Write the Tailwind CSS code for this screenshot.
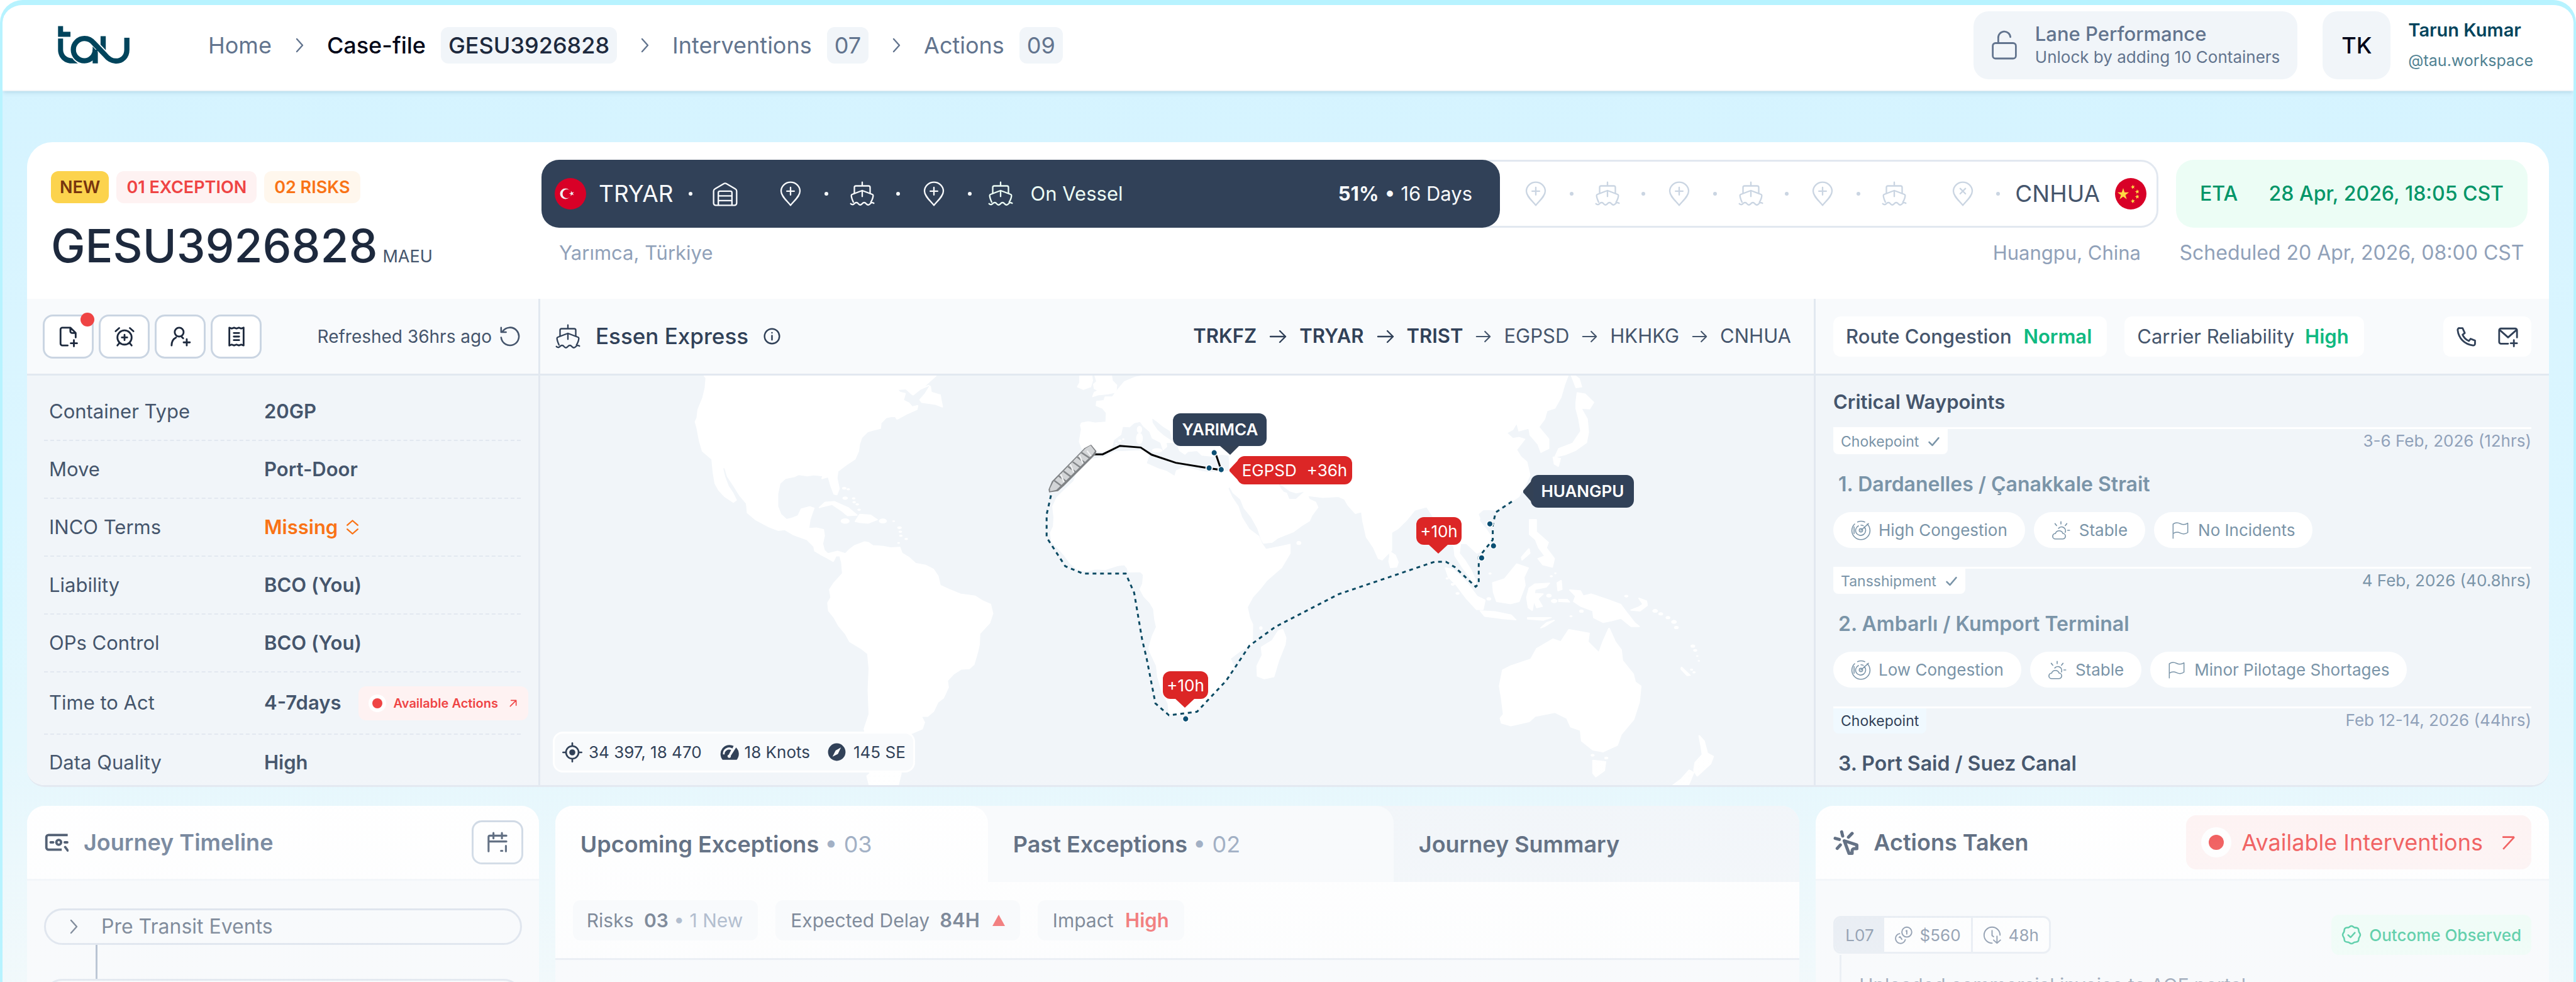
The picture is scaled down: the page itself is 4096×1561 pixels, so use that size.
<!DOCTYPE html>
<html lang="en">
<head>
  <meta charset="UTF-8">
  <meta name="viewport" content="width=device-width, initial-scale=1.0">
  <title>Case-file GESU3926828 - tau</title>
  <script src="https://cdn.jsdelivr.net/npm/@tailwindcss/browser@4"></script>
</head>
<body class="bg-white font-[family-name:Inter,sans-serif] text-slate-700">

  <!-- Icon set -->
  <svg class="hidden" aria-hidden="true">
    <symbol id="chevron" viewBox="0 0 24 24" fill="none" stroke="currentColor" stroke-width="2.4" stroke-linecap="round" stroke-linejoin="round"><path d="M8 2l9 10-9 10"/></symbol>
    <symbol id="arrow" viewBox="0 0 28 24" fill="none" stroke="currentColor" stroke-width="2.4" stroke-linecap="round" stroke-linejoin="round"><path d="M2 12h24M17 3l9 9-9 9"/></symbol>
    <symbol id="arrow-ne" viewBox="0 0 24 24" fill="none" stroke="currentColor" stroke-width="2.4" stroke-linecap="round" stroke-linejoin="round"><path d="M5 19L19 5M7 5h12v12"/></symbol>
    <symbol id="arrow-bare" viewBox="0 0 24 24" fill="none" stroke="currentColor" stroke-width="2.6"><path d="M3 3.500h18M21 3.500L4 22"/></symbol>
    <symbol id="check" viewBox="0 0 24 24" fill="none" stroke="currentColor" stroke-width="3" stroke-linecap="round" stroke-linejoin="round"><path d="M3 13l6 6L21 5"/></symbol>
    <symbol id="ship" viewBox="0 0 24 24" fill="none" stroke="currentColor" stroke-width="1.4" stroke-linecap="round" stroke-linejoin="round"><path d="M12 1v3.500M4.500 11.500V6a1.500 1.500 0 0 1 1.500-1.500h12A1.500 1.500 0 0 1 19.500 6v5.500M12 9v5.500M3.500 20C2.200 17 1.600 15 1.600 13.600c0-.5.3-.8.8-1L11 9.300a2.500 2.500 0 0 1 2 0l8.600 3.300c.5.200.8.500.8 1 0 1.500-.8 4-2.200 6.400M1 21.500c.8 1 2.200 1.200 3.400 0 1.300-1.500 2.800-1.500 3.900 0s2.500 1.500 3.700 0 2.500-1.500 3.700 0 2.600 1.500 3.800.1 2.200-1.500 3.500-.6"/></symbol>
    <symbol id="pin" viewBox="0 0 20 24" fill="none" stroke="currentColor" stroke-width="1.400" stroke-linecap="round" stroke-linejoin="round"><path d="M10 23C7 19 1 14.500 1 9.500a9 8.500 0 0 1 18 0C19 14.500 13 19 10 23zM10 6v7M6.500 9.500h7"/></symbol>
    <symbol id="pin-x" viewBox="0 0 20 24" fill="none" stroke="currentColor" stroke-width="1.400" stroke-linecap="round" stroke-linejoin="round"><path d="M10 23C7 19 1 14.500 1 9.500a9 8.500 0 0 1 18 0C19 14.500 13 19 10 23zM7.500 7l5 5M12.500 7l-5 5"/></symbol>
    <symbol id="warehouse" viewBox="0 0 24 24" fill="none" stroke="currentColor" stroke-width="1.400" stroke-linecap="round" stroke-linejoin="round"><path d="M1 9.500c0-1 .4-1.700 1.300-2.200L10.500 2.500a3 3 0 0 1 3 0l8.200 4.800c.9.500 1.300 1.200 1.300 2.200V21a2 2 0 0 1-2 2H3a2 2 0 0 1-2-2zM5.500 23V11a1.500 1.500 0 0 1 1.500-1.500h10a1.500 1.500 0 0 1 1.500 1.500v12M5.500 14h13M5.500 18.500h13"/></symbol>
    <symbol id="info" viewBox="0 0 24 24" fill="none" stroke="currentColor" stroke-width="2.200" stroke-linecap="round"><circle cx="12" cy="12" r="10.500"/><path d="M12 11v6M12 7v.2"/></symbol>
    <symbol id="lock-open" viewBox="0 0 24 28" fill="none" stroke="currentColor" stroke-width="1.600" stroke-linecap="round" stroke-linejoin="round"><rect x="1.500" y="12" width="21" height="14" rx="2.500"/><path d="M6.500 12V7.500a5.500 5.500 0 0 1 11-1"/></symbol>
    <symbol id="file-plus" viewBox="0 0 24 24" fill="none" stroke="currentColor" stroke-width="2" stroke-linecap="round" stroke-linejoin="round"><path d="M11 22H5a2 2 0 0 1-2-2V4a2 2 0 0 1 2-2h9l6 6v5M14 2v4a2 2 0 0 0 2 2h4M18 16v7M14.500 19.500h7"/></symbol>
    <symbol id="alarm-plus" viewBox="0 0 24 24" fill="none" stroke="currentColor" stroke-width="2" stroke-linecap="round" stroke-linejoin="round"><circle cx="12" cy="13" r="8"/><path d="M12 10v6M9 13h6M2 6l4-3.500M22 6l-4-3.500M6.500 19L4 22M17.500 19l2.500 3"/></symbol>
    <symbol id="user-plus" viewBox="0 0 24 24" fill="none" stroke="currentColor" stroke-width="2" stroke-linecap="round" stroke-linejoin="round"><circle cx="10.500" cy="7" r="5"/><path d="M2 22c0-4 2-7.500 5-9M13.500 12.500l1.500 1.500M19 15v7M15.500 18.500h7"/></symbol>
    <symbol id="receipt" viewBox="0 0 24 24" fill="none" stroke="currentColor" stroke-width="2" stroke-linecap="round" stroke-linejoin="round"><path d="M4 2l2.700 1L9.300 2 12 3l2.700-1 2.600 1L20 2v20l-2.700-1-2.600 1-2.700-1-2.700 1-2.600-1L4 22zM9 8h6M9 12h6M9 16h6"/></symbol>
    <symbol id="refresh" viewBox="0 0 24 24" fill="none" stroke="currentColor" stroke-width="1.800" stroke-linecap="round" stroke-linejoin="round"><path d="M3.500 6.500A10 10 0 1 1 2 13M2 2v5h5.500"/></symbol>
    <symbol id="phone" viewBox="0 0 24 24" fill="none" stroke="currentColor" stroke-width="2" stroke-linecap="round" stroke-linejoin="round"><path d="M7.500 2.500H4A2 2 0 0 0 2 4.700C3 14 10 21 19.300 22a2 2 0 0 0 2.200-2v-3.500l-5-2-2 2.500a14 14 0 0 1-7-7L10 8z"/></symbol>
    <symbol id="mail-plus" viewBox="0 0 24 24" fill="none" stroke="currentColor" stroke-width="2" stroke-linecap="round" stroke-linejoin="round"><path d="M12 20H4a2 2 0 0 1-2-2V5a2 2 0 0 1 2-2h16a2 2 0 0 1 2 2v8M2.500 4.500L12 13l9.500-8.500M18.500 16v7M15 19.500h7"/></symbol>
    <symbol id="sort" viewBox="0 0 20 24" fill="none" stroke="currentColor" stroke-width="2.200" stroke-linecap="round" stroke-linejoin="round"><path d="M2 9l8-7 8 7M2 15l8 7 8-7"/></symbol>
    <symbol id="radar" viewBox="0 0 24 24" fill="none" stroke="currentColor" stroke-width="1.200" stroke-linecap="round"><path d="M19.500 4.500A10.800 10.800 0 1 1 4.500 4.500M8 2a10.800 10.800 0 0 1 8.500.1M16 8a6 6 0 1 1-7-1.300M12 5.800c1 0 2 .2 2.800.7M12 12l9-8M3.800 8v8"/><circle cx="12" cy="12" r="2"/></symbol>
    <symbol id="weather" viewBox="0 0 24 24" fill="none" stroke="currentColor" stroke-width="1.300" stroke-linecap="round" stroke-linejoin="round"><path d="M5 23h9a3.500 3.500 0 0 0 .5-7 5 5 0 0 0-9.500 0 3.500 3.500 0 0 0 0 7zM9 9.500a5 5 0 0 1 8.500 5M12 1v3M4.500 3.500L6.500 6M19.500 3.500L17.500 6M20.500 12H23"/></symbol>
    <symbol id="flag" viewBox="0 0 24 24" fill="none" stroke="currentColor" stroke-width="1.300" stroke-linecap="round" stroke-linejoin="round"><path d="M2 23V3.500c4-3 7-2 10-.5s6 2 10-.8V15c-4 3-7 2.300-10 .8s-6-2.300-10 .7"/></symbol>
    <symbol id="crosshair" viewBox="0 0 24 24" fill="none" stroke="currentColor" stroke-width="2" stroke-linecap="round"><circle cx="12" cy="12" r="7.500"/><circle cx="12" cy="12" r="2.600" fill="currentColor"/><path d="M12 1v3M12 20v3M1 12h3M20 12h3"/></symbol>
    <symbol id="gauge" viewBox="0 0 24 20" fill="currentColor"><path d="M3.500 19A11 11 0 0 1 17 2.200l-1.500 3A7.500 7.500 0 0 0 4 12.500h2A5.500 5.500 0 0 1 14 7.200l-3 5.600a2 2 0 1 0 2.500 1.400L20 4a11 11 0 0 1 .8 15z"/></symbol>
    <symbol id="compass" viewBox="0 0 24 24"><circle cx="12" cy="12" r="11.500" fill="currentColor"/><path d="M17.500 6l-4 8.500L6.500 18l4-8z" fill="#fff"/></symbol>
    <symbol id="timeline" viewBox="0 0 28 22" fill="none" stroke="currentColor" stroke-width="2.800" stroke-linejoin="round"><path d="M27 2.500H4.500a2.500 2.500 0 0 0-2.500 2.500v12a2.500 2.500 0 0 0 2.500 2.500H20"/><circle cx="16.500" cy="11" r="2.800"/><path d="M7 11h3M23.500 11h3M24 16.500l3 4" stroke-linecap="round"/></symbol>
    <symbol id="calendar" viewBox="0 0 24 24" fill="none" stroke="currentColor" stroke-width="2.200" stroke-linecap="round" stroke-linejoin="round"><path d="M2 22V6a1.500 1.500 0 0 1 1.500-1.500H22M2 11h20M7.500 1.500v6M17 1.500v6M21.500 16v6M16 21.500h1.500"/></symbol>
    <symbol id="click" viewBox="0 0 24 24" fill="none" stroke="currentColor" stroke-width="3" stroke-linecap="round" stroke-linejoin="round"><path d="M10.500 10.500l12 4v3.500h-2.500a2 2 0 0 0-2 2v2.500h-3zM8 2l1 4M1.800 8.200l4 1M18 3.500L14.500 7M3.800 17.800l3-3.300"/></symbol>
    <symbol id="coins" viewBox="0 0 24 24" fill="none" stroke="currentColor" stroke-width="1.600" stroke-linecap="round" stroke-linejoin="round"><circle cx="16.500" cy="8" r="6.500"/><path d="M7 10a6.500 6.500 0 1 0 7.500 8M15.500 6.500l1-.5v4.500M6.500 15l1-1 2.500 3.500"/></symbol>
    <symbol id="clock-down" viewBox="0 0 24 24" fill="none" stroke="currentColor" stroke-width="1.600" stroke-linecap="round" stroke-linejoin="round"><path d="M12 22.500A10.500 10.500 0 1 1 22.500 12M12 6v6.500l2 1.500M18.500 13.500v9M14 18.500l4.500 4 4.500-4"/></symbol>
    <symbol id="badge-check" viewBox="0 0 24 24" fill="none" stroke="currentColor" stroke-width="1.900" stroke-linecap="round" stroke-linejoin="round"><path d="M12 1.500c1.700 0 2.300 1.500 3.800 1.800s3 0 4 1.100.6 2.600 1.100 4 1.600 2 1.600 3.600-1.100 2.300-1.600 3.700 0 2.900-1.100 4-2.500.7-4 1.100-2.100 1.700-3.800 1.700-2.300-1.300-3.800-1.700-3 0-4-1.100-.6-2.600-1.100-4S1.500 13.600 1.500 12s1.100-2.200 1.600-3.600 0-2.900 1.100-4 2.500-.800 4-1.100S10.300 1.500 12 1.500zM8 12.300l3 2.700 5-5.500"/></symbol>
  </svg>

  <div class="relative h-screen overflow-hidden rounded-t-[36px] border-x-4 border-t-8 border-[#b7f3ff] bg-linear-to-b from-[#d4f3ff] via-[#dcf6ff] to-[#ecf8fb]">

    <!-- Top bar -->
    <header class="flex h-[137px] items-center justify-between rounded-t-[28px] border-b-2 border-slate-100 bg-white pr-16 pb-2 pl-[88px] shadow-md shadow-sky-900/10">
      <div class="flex items-center">
        <a href="#" aria-label="tau">
          <svg class="h-[61px] w-[114px]" viewBox="80 56 398 212">
            <path d="M81 57h28v32h41v28H81zM81 126h28v62c0 26 20 46 46 47l9 1 27 28h-36c-42 0-74-34-74-76zM317 113h29v80l-29-30z" fill="#00445c"/>
            <path d="M463 122v66c0 38-26 63-61 63-28 0-44-14-60-34l-61-64c-14-17-30-27-53-27a62 62 0 1 0 0 124c32 0 59-28 59-62" fill="none" stroke="#fff" stroke-width="42"/>
            <path d="M463 122v66c0 38-26 63-61 63-28 0-44-14-60-34l-61-64c-14-17-30-27-53-27a62 62 0 1 0 0 124c32 0 59-28 59-62" fill="none" stroke="#00445c" stroke-width="29"/>
            <path d="M273 170l29 32v62h-29z" fill="#00445c"/>
          </svg>
        </a>
        <nav class="ml-[125px] flex items-center text-[36px]/[44px] text-slate-500" aria-label="Breadcrumb">
          <a href="#">Home</a>
          <svg class="mx-8 size-6"><use href="#chevron"/></svg>
          <a href="#" class="font-medium text-slate-950">Case-file</a>
          <span class="ml-6 rounded-xl bg-slate-100 px-3 py-[7px] font-medium text-slate-800">GESU3926828</span>
          <svg class="mx-8 size-6"><use href="#chevron"/></svg>
          <a href="#">Interventions</a>
          <span class="ml-6 rounded-xl bg-slate-100 px-3 py-[7px]">07</span>
          <svg class="mx-8 size-6"><use href="#chevron"/></svg>
          <a href="#">Actions</a>
          <span class="ml-6 rounded-xl bg-slate-100 px-3 py-[7px]">09</span>
        </nav>
      </div>
      <div class="flex items-center gap-10">
        <button class="flex h-[108px] items-center gap-7 rounded-3xl bg-slate-100 px-7 text-left text-slate-500">
          <svg class="h-[50px] w-[42px]"><use href="#lock-open"/></svg>
          <span>
            <span class="block text-[31px]/[38px] font-medium">Lane Performance</span>
            <span class="block text-[26px]/[36px]">Unlock by adding 10 Containers</span>
          </span>
        </button>
        <div class="flex items-center gap-7">
          <span class="flex size-[108px] items-center justify-center rounded-3xl bg-slate-100 text-[36px] font-medium text-slate-950">TK</span>
          <div class="text-[#00445c]">
            <p class="text-[29px]/[48px] font-semibold">Tarun Kumar</p>
            <p class="text-[25px]/[48px] text-[#4f8192]">@tau.workspace</p>
          </div>
        </div>
      </div>
    </header>

    <main class="px-[39px] pt-[81px]">

      <!-- Case card -->
      <section class="overflow-hidden rounded-t-[40px] rounded-b-[28px] border-b-3 border-slate-200 bg-white">
        <div class="flex h-[249px] pr-[34px] pl-[38px]">
          <div class="w-[780px] shrink-0 pt-[46px]">
            <div class="flex gap-3 text-[27px]/[51px] font-semibold">
              <span class="rounded-xl bg-[#fcd34d] px-3.5 text-[#78350f]">NEW</span>
              <span class="rounded-xl bg-red-50 px-4 text-[#ef4444]">01 EXCEPTION</span>
              <span class="rounded-xl bg-orange-50 px-4 text-[#f97316]">02 RISKS</span>
            </div>
            <h1 class="mt-6 flex items-baseline gap-2 text-[73px]/[88px] font-medium text-slate-800">GESU3926828 <small class="text-[27px] font-normal text-slate-600">MAEU</small></h1>
          </div>
          <div class="grow pt-7">
            <div class="flex h-[108px] rounded-[28px] border-3 border-slate-200">
              <div class="-m-[3px] flex w-[1524px] shrink-0 items-center rounded-[28px] bg-slate-700 pr-11 pl-[21px] text-slate-50">
                <svg class="size-[50px]" viewBox="0 0 50 50"><circle cx="25" cy="25" r="25" fill="#d80027"/><circle cx="17" cy="25" r="8.500" fill="#f0f0f0"/><circle cx="19.500" cy="25" r="7" fill="#d80027"/><path d="M26 20.500l1.700 2.600 3-.9-2 2.500 1.700 2.600-2.900-1.100-2 2.500.1-3.100-2.900-1.100 3-.8z" fill="#f0f0f0"/></svg>
                <span class="ml-5 text-[37px]">TRYAR</span>
                <span class="mx-6 size-1.5 rounded-full bg-current"></span>
                <svg class="mx-2 size-[40px]"><use href="#warehouse"/></svg>
                <span class="ml-12 flex items-center">
                  <span class="flex w-[57px] justify-center"><svg class="h-[40px] w-[34px]"><use href="#pin"/></svg></span>
                  <span class="flex w-[57px] justify-center"><span class="size-1.5 rounded-full bg-current"></span></span>
                  <span class="flex w-[57px] justify-center"><svg class="size-[40px]"><use href="#ship"/></svg></span>
                  <span class="flex w-[57px] justify-center"><span class="size-1.5 rounded-full bg-current"></span></span>
                  <span class="flex w-[57px] justify-center"><svg class="h-[40px] w-[34px]"><use href="#pin"/></svg></span>
                  <span class="flex w-[57px] justify-center"><span class="size-1.5 rounded-full bg-current"></span></span>
                </span>
                <span class="flex items-center gap-7 text-[31px] text-emerald-50"><svg class="size-[40px]"><use href="#ship"/></svg>On Vessel</span>
                <span class="ml-auto text-[31px]"><b class="font-bold">51%</b> • 16 Days</span>
              </div>
              <div class="flex grow items-center justify-end pr-4 text-slate-300">
                <span class="flex items-center">
                  <span class="flex w-[57px] justify-center"><svg class="h-[40px] w-[34px]"><use href="#pin"/></svg></span>
                  <span class="flex w-[57px] justify-center"><span class="size-1.5 rounded-full bg-current"></span></span>
                  <span class="flex w-[57px] justify-center"><svg class="size-[40px]"><use href="#ship"/></svg></span>
                  <span class="flex w-[57px] justify-center"><span class="size-1.5 rounded-full bg-current"></span></span>
                  <span class="flex w-[57px] justify-center"><svg class="h-[40px] w-[34px]"><use href="#pin"/></svg></span>
                  <span class="flex w-[57px] justify-center"><span class="size-1.5 rounded-full bg-current"></span></span>
                  <span class="flex w-[57px] justify-center"><svg class="size-[40px]"><use href="#ship"/></svg></span>
                  <span class="flex w-[57px] justify-center"><span class="size-1.5 rounded-full bg-current"></span></span>
                  <span class="flex w-[57px] justify-center"><svg class="h-[40px] w-[34px]"><use href="#pin"/></svg></span>
                  <span class="flex w-[57px] justify-center"><span class="size-1.5 rounded-full bg-current"></span></span>
                  <span class="flex w-[57px] justify-center"><svg class="size-[40px]"><use href="#ship"/></svg></span>
                </span>
                <svg class="ml-16 h-[40px] w-[34px]"><use href="#pin-x"/></svg>
                <span class="ml-9 size-1.5 rounded-full bg-current"></span>
                <span class="ml-6 text-[37px] text-slate-600">CNHUA</span>
                <svg class="ml-6 size-[50px]" viewBox="0 0 50 50"><circle cx="25" cy="25" r="25" fill="#d80027"/><path d="M13 16l2.200 6.700h7L16.500 27l2.200 6.700L13 29.500l-5.700 4.200L9.500 27l-5.700-4.300h7z" fill="#ffda44"/><path id="star" d="M28 10.500l1 2.300 2.500-.3-1.700 1.900 1.300 2.200-2.400-.9-1.700 1.800v-2.500l-2.300-1.100 2.500-.6zM35 18l1 2.300 2.500-.3-1.700 1.900 1.300 2.200-2.400-.9-1.700 1.800v-2.500l-2.300-1.100 2.500-.6zM35 26l1 2.300 2.500-.3-1.700 1.900 1.300 2.200-2.400-.9-1.700 1.800v-2.500l-2.300-1.100 2.500-.6zM28 33l1 2.300 2.500-.3-1.700 1.900 1.300 2.200-2.400-.9-1.700 1.800v-2.500l-2.300-1.100 2.500-.6z" fill="#ffda44"/></svg>
              </div>
            </div>
            <div class="flex justify-between px-7 pt-[22px] text-[31px]/[36px] text-slate-400">
              <span>Yarımca, Türkiye</span>
              <span>Huangpu, China</span>
            </div>
          </div>
          <div class="ml-7 w-[559px] shrink-0 pt-7">
            <div class="flex h-[108px] items-center justify-between rounded-[28px] bg-emerald-50 px-[38px] text-[32px] font-medium text-[#059669]">
              <span>ETA</span><span>28 Apr, 2026, 18:05 CST</span>
            </div>
            <p class="pt-[22px] text-center text-[32px]/[36px] text-slate-400">Scheduled 20 Apr, 2026, 08:00 CST</p>
          </div>
        </div>

        <div class="grid grid-cols-[816fr_2028fr_1166fr]">
          <!-- Column: container facts -->
          <div class="flex flex-col border-r-3 border-slate-200 bg-slate-100">
            <div class="flex h-[122px] items-center gap-2 border-b-3 border-slate-200 bg-slate-50 pr-[28px] pl-[25px] text-slate-800">
              <button class="relative flex h-[70px] w-[81px] items-center justify-center rounded-2xl border-3 border-slate-300 bg-white" aria-label="Add document">
                <svg class="size-[34px]"><use href="#file-plus"/></svg>
                <span class="absolute -top-1.5 -right-1 size-[22px] rounded-full bg-[#ef4444]"></span>
              </button>
              <button class="flex h-[70px] w-[81px] items-center justify-center rounded-2xl border-3 border-slate-300 bg-white" aria-label="Add reminder"><svg class="size-[34px]"><use href="#alarm-plus"/></svg></button>
              <button class="flex h-[70px] w-[81px] items-center justify-center rounded-2xl border-3 border-slate-300 bg-white" aria-label="Add person"><svg class="size-[34px]"><use href="#user-plus"/></svg></button>
              <button class="flex h-[70px] w-[81px] items-center justify-center rounded-2xl border-3 border-slate-300 bg-white" aria-label="Notes"><svg class="size-[34px]"><use href="#receipt"/></svg></button>
              <span class="ml-auto text-[28px] text-slate-600">Refreshed 36hrs ago</span>
              <button class="ml-1 text-slate-600" aria-label="Refresh"><svg class="size-[34px]"><use href="#refresh"/></svg></button>
            </div>
            <dl class="divide-y-2 divide-dashed divide-slate-200 pt-3 pr-7 pl-[27px] text-[31px] text-slate-600">
              <div class="flex h-[92px] items-center pl-2"><dt class="w-[342px]">Container Type</dt><dd class="font-semibold">20GP</dd></div>
              <div class="flex h-[92px] items-center pl-2"><dt class="w-[342px]">Move</dt><dd class="font-semibold">Port-Door</dd></div>
              <div class="flex h-[92px] items-center pl-2">
                <dt class="w-[342px]"><label for="inco">INCO Terms</label></dt>
                <dd class="flex items-center gap-3 font-semibold text-[#f97316]">
                  <select id="inco" class="appearance-none"><option>Missing</option></select>
                  <svg class="h-[26px] w-[21px]"><use href="#sort"/></svg>
                </dd>
              </div>
              <div class="flex h-[92px] items-center pl-2"><dt class="w-[342px]">Liability</dt><dd class="font-semibold">BCO (You)</dd></div>
              <div class="flex h-[92px] items-center pl-2"><dt class="w-[342px]">OPs Control</dt><dd class="font-semibold">BCO (You)</dd></div>
              <div class="flex h-[99px] items-center pl-2">
                <dt class="w-[342px] shrink-0">Time to Act</dt>
                <dd class="-mr-3 flex grow items-center justify-between font-semibold">4-7days
                  <a href="#" class="flex h-[54px] items-center gap-3 rounded-xl bg-red-50 px-4 text-[20px] text-[#ef4444]">
                    <span class="flex size-7 items-center justify-center rounded-full bg-white"><span class="size-4 rounded-full bg-[#ef4444]"></span></span>
                    Available Actions
                    <svg class="ml-1 size-4"><use href="#arrow-ne"/></svg>
                  </a>
                </dd>
              </div>
              <div class="flex h-[80px] items-center pt-2 pl-2"><dt class="w-[342px]">Data Quality</dt><dd class="font-semibold">High</dd></div>
            </dl>
          </div>

          <!-- Column: vessel and map -->
          <div class="flex flex-col border-r-3 border-slate-200">
            <div class="flex h-[122px] items-center justify-between border-b-3 border-slate-200 bg-slate-50 pr-9 pl-6">
              <h2 class="flex items-center gap-6 text-[35px] font-medium">
                <svg class="size-[40px]"><use href="#ship"/></svg>Essen Express
                <svg class="size-[27px]"><use href="#info"/></svg>
              </h2>
              <ol class="flex items-center gap-5 text-[31px] text-slate-600">
                <li class="font-semibold text-slate-700">TRKFZ</li>
                <svg class="h-6 w-7 text-slate-700"><use href="#arrow"/></svg>
                <li class="font-semibold text-slate-700">TRYAR</li>
                <svg class="h-6 w-7 text-slate-700"><use href="#arrow"/></svg>
                <li class="font-semibold text-slate-700">TRIST</li>
                <svg class="h-[22px] w-[25px]"><use href="#arrow"/></svg>
                <li>EGPSD</li>
                <svg class="h-[22px] w-[25px]"><use href="#arrow"/></svg>
                <li>HKHKG</li>
                <svg class="h-[22px] w-[25px]"><use href="#arrow"/></svg>
                <li>CNHUA</li>
              </ol>
            </div>
            <div class="relative grow bg-slate-100">
              <svg class="absolute inset-0 h-full w-full" viewBox="1000 694 2351 759" preserveAspectRatio="none" role="img" aria-label="World map with the vessel route">
                <g fill="#fff" stroke="#fff" stroke-linejoin="round">
                  <!-- Americas -->
                  <g transform="translate(1000 680) scale(.829 .4974)" stroke-width="4">
                    <path d="M362 20L370 38 368 75 363 110 352 155 350 185 346 200 350 225 355 270 362 310 383 340 386 390 390 430 398 455 412 480 430 500 436 492 428 465 418 440 410 405 405 370 412 372 418 405 432 440 445 475 460 505 462 540 480 565 510 592 530 605 545 602 565 622 595 640 610 665 612 682 625 695 640 708 652 720 658 700 668 700 672 725 674 765 655 800 645 825 648 855 641 875 643 905 655 930 665 960 680 990 690 1020 715 1045 730 1065 733 1120 731 1200 733 1290 722 1345 730 1400 722 1450 735 1510 728 1520 735 1565 795 1565 803 1510 785 1450 795 1400 826 1362 850 1345 855 1320 848 1298 862 1298 875 1280 885 1245 897 1230 908 1190 906 1165 920 1140 937 1122 955 1120 965 1105 973 1060 977 1030 978 990 1000 950 1007 915 1002 880 985 868 968 850 935 842 910 825 890 810 885 775 875 750 858 735 835 728 820 705 805 690 800 668 780 670 765 665 740 662 730 650 722 648 700 662 690 675 680 692 662 683 640 692 632 680 628 655 632 625 630 602 615 596 597 598 600 565 605 540 609 522 600 517 582 525 575 550 560 560 548 565 535 545 528 515 528 470 533 430 545 412 565 405 575 397 595 402 610 398 630 402 628 412 642 405 648 440 655 470 660 472 665 450 660 410 662 385 680 362 700 340 708 310 710 285 715 260 728 238 740 232 757 225 758 205 770 185 790 178 795 190 815 172 838 155 840 140 828 145 820 130 808 120 812 95 800 90 795 80 815 78 830 100 845 80 865 65 850 75 880 30 884 20z"/>
                    <path d="M868 68L870 90 890 100 892 120 895 145 880 135 850 128 846 118 858 95zM622 520L635 500 655 498 685 520 705 548 685 550 670 530 650 508 630 516zM702 572L712 545 735 548 750 565 730 578 710 575z"/>
                    <circle cx="679" cy="570" r="8"/><circle cx="763" cy="570" r="7"/><circle cx="787" cy="571" r="1"/><circle cx="800" cy="595" r="3"/><circle cx="802" cy="610" r="2"/><circle cx="803" cy="625" r="2"/><circle cx="815" cy="637" r="2"/><circle cx="798" cy="652" r="1"/><circle cx="677" cy="448" r="3"/><circle cx="686" cy="452" r="2"/><circle cx="679" cy="485" r="4"/><circle cx="698" cy="486" r="2"/><circle cx="699" cy="500" r="2"/><circle cx="706" cy="508" r="2"/><circle cx="710" cy="528" r="2"/>
                  </g>
                  <!-- Europe, Africa, Asia -->
                  <g transform="translate(1900 690) scale(.4464 .3333)" stroke-width="4">
                    <path d="M530 0L445 20 400 45 375 85 350 130 320 130 315 150 285 155 283 180 310 195 325 220 323 270 280 275 250 268 222 275 218 290 222 310 213 380 225 420 262 425 300 435 345 430 350 400 355 370 385 340 392 295 420 298 440 275 465 268 480 295 505 325 515 360 550 385 560 425 575 408 572 385 605 385 560 345 535 315 515 275 512 245 530 262 560 295 590 320 600 370 620 400 628 430 650 450 662 435 700 430 720 455 770 462 800 450 832 455 835 500 833 545 800 545 750 550 720 545 650 520 615 540 608 572 575 545 540 530 490 500 500 460 495 430 450 430 360 435 320 465 290 470 255 480 205 545 190 600 150 650 120 690 103 740 108 800 106 850 94 885 98 935 130 980 150 1010 175 1055 210 1095 250 1098 280 1088 320 1092 370 1070 400 1065 412 1085 415 1105 465 1103 478 1120 475 1170 464 1200 480 1240 505 1275 520 1310 525 1370 532 1410 515 1460 500 1529 506 1551 532 1626 537 1686 556 1775 580 1835 584 1892 640 1895 695 1880 747 1813 796 1745 821 1701 854 1634 838 1586 879 1544 929 1507 930 1395 918 1360 908 1300 930 1245 960 1200 990 1150 1050 1080 1085 1000 1085 950 1050 960 985 978 968 945 955 905 915 865 885 800 870 740 845 690 828 640 835 630 850 665 880 700 895 750 925 800 950 860 965 920 975 945 1010 940 1035 915 1100 880 1130 850 1165 820 1175 790 1200 745 1190 715 1165 700 1148 655 1130 675 1110 700 1080 700 1070 665 1058 660 1045 640 1030 600 1060 630 1085 655 1110 665 1150 655 1155 680 1220 690 1285 685 1310 700 1325 735 1355 780 1380 770 1385 820 1400 910 1430 970 1450 1030 1465 1038 1485 1010 1505 985 1505 885 1530 865 1568 815 1600 761 1650 743 1666 776 1700 850 1732 925 1762 962 1766 1014 1799 1082 1832 1141 1852 1175 1852 1149 1832 1089 1807 1037 1785 1000 1790 947 1815 947 1857 1000 1882 985 1906 955 1915 903 1895 865 1868 820 1873 776 1898 758 1940 761 1973 731 2006 709 2031 686 2056 626 2077 567 2064 492 2039 462 2022 425 2056 365 2031 355 2006 361 1981 331 2006 313 2022 276 2031 321 2072 306 2077 343 2110 395 2122 440 2155 418 2155 365 2114 298 2138 253 2147 209 2180 194 2205 134 2221 60 2238 0z"/>
                    <path d="M275 0L345 0 350 40 368 65 365 105 330 115 290 120 268 130 275 105 290 95 275 85 272 60 285 45zM215 0L265 12 268 40 260 75 230 90 205 75 215 50zM1500 992L1520 1010 1532 1050 1525 1078 1500 1080 1493 1045z"/>
                    <ellipse cx="462" cy="312" rx="9" ry="18"/><ellipse cx="462" cy="362" rx="12" ry="30"/><ellipse cx="535" cy="428" rx="20" ry="10"/><circle cx="381" cy="375" r="5"/><circle cx="395" cy="366" r="3"/><circle cx="366" cy="390" r="3"/><ellipse cx="1121" cy="943" rx="8" ry="9"/><ellipse cx="964" cy="1416" rx="5" ry="8"/>
                  </g>
                  <!-- Asian islands, Oceania, Madagascar -->
                  <g transform="translate(2200 680) scale(.7398 .4974)" stroke-width="4">
                    <path d="M230 974L238 1005 236 1030 220 1090 208 1150 185 1158 168 1148 167 1110 180 1070 178 1040 205 1015 220 980zM637 745L655 750 690 800 715 850 735 865 730 900 715 900 690 860 665 810 645 780zM724 905L760 908 800 920 812 938 775 933 735 925zM755 800L785 785 815 730 843 745 832 780 835 810 820 870 800 878 765 870 757 835zM846 820L860 805 896 802 888 816 860 825 858 840 880 842 867 860 878 888 865 893 857 865 853 903 844 893 840 855zM847 565L863 565 863 610 893 650 888 670 908 710 903 742 880 733 868 710 885 700 870 670 862 640 847 620zM845 674L847 690 828 715 827 705zM947 827L973 830 980 850 1000 842 1040 862 1073 880 1088 910 1108 948 1120 963 1100 963 1075 932 1050 942 1030 948 1007 930 1005 905 975 888 957 870 962 850z"/>
                    <path d="M772 1185L780 1125 800 1110 850 1085 865 1045 905 1010 925 1020 945 975 995 988 992 1020 1020 1062 1030 1020 1045 970 1060 1020 1075 1050 1078 1090 1105 1140 1110 1170 1124 1185 1120 1245 1106 1310 1075 1365 1065 1406 1030 1430 1005 1423 977 1390 974 1350 950 1338 940 1305 910 1283 860 1298 845 1318 800 1333 777 1323 774 1305 782 1290 777 1230zM1005 1462L1036 1467 1033 1500 1012 1523 1005 1510zM1270 1370L1282 1390 1290 1435 1305 1447 1298 1475 1265 1520 1257 1500 1260 1470 1278 1440 1275 1410zM1245 1498L1256 1507 1240 1565 1195 1565 1225 1532zM963 130L966 92 985 97 1006 128 996 152 975 150 990 190 993 240 988 278 960 308 935 323 910 332 920 300 955 280 975 235 970 190 963 150zM906 332L923 337 918 366 909 358zM948 15L970 40 976 70 963 73 956 45zM498 690L515 715 516 735 505 742 499 715zM1120 858L1138 868 1140 885 1122 905 1100 902 1120 890 1130 880z"/>
                    <path d="M842 935L880 940 900 930 842 930zM875 968L890 948 908 940 885 962zM916 800L925 792 927 825 918 830zM920 862L940 862 946 872 920 870zM1226 1115L1247 1145 1240 1146 1225 1122z"/>
                    <circle cx="895" cy="848" r="5"/><circle cx="908" cy="868" r="6"/><circle cx="950" cy="925" r="2"/><circle cx="976" cy="906" r="4"/><circle cx="745" cy="860" r="4"/><circle cx="748" cy="766" r="2"/><circle cx="655" cy="806" r="3"/><circle cx="667" cy="840" r="3"/><circle cx="641" cy="784" r="2"/><circle cx="1160" cy="905" r="5"/><circle cx="1174" cy="916" r="4"/><circle cx="1192" cy="930" r="4"/><circle cx="1207" cy="946" r="5"/><circle cx="1213" cy="967" r="4"/><circle cx="1254" cy="1036" r="4"/><circle cx="1260" cy="1052" r="3"/><circle cx="1265" cy="1073" r="1"/><circle cx="1269" cy="1091" r="1"/><circle cx="1251" cy="1124" r="2"/><circle cx="1257" cy="1134" r="2"/><circle cx="1088" cy="850" r="3"/><circle cx="1004" cy="1443" r="3"/><circle cx="1038" cy="1453" r="3"/><circle cx="901" cy="776" r="2"/><circle cx="911" cy="765" r="1"/>
                    <path d="M722 545L732 532 742 532 748 550 738 568 728 568z" fill="#f1f5f9" stroke="#f1f5f9"/>
                  </g>
                </g>
                <g transform="translate(1900 690) scale(.4464 .3333)">
                  <g fill="none" stroke-width="3">
                    <path d="M275 450H310L381 403 467 412 512 452 612 497 740 525 800 537 778 450" stroke="#000" vector-effect="non-scaling-stroke"/>
                    <path d="M96 678L78 785V912L155 1072 228 1113H405L440 1220 473 1480 491 1581 528 1835 584 1901 700 1881 821 1708 917 1514 1023 1410 1285 1228 1683 1047H1729L1766 1077 1852 1186 1865 1171V1022L1923 925V843L1935 773 2006 709" stroke="#0b4a63" stroke-dasharray="6 6" vector-effect="non-scaling-stroke"/>
                  </g>
                  <g fill="#0b4f73" stroke="#fff" stroke-width="5">
                    <ellipse cx="771" cy="441" rx="13" ry="17"/><ellipse cx="750" cy="526" rx="13" ry="17"/><ellipse cx="800" cy="535" rx="13" ry="17"/><ellipse cx="1911" cy="837" rx="13" ry="17"/><ellipse cx="1926" cy="959" rx="13" ry="17"/><ellipse cx="1877" cy="1026" rx="13" ry="17"/><ellipse cx="653" cy="1921" rx="13" ry="17"/>
                  </g>
                  <!-- Vessel -->
                  <path d="M262 396L284 432 280 450 150 625 125 655 88 662 86 645 100 600 235 415z" fill="#7f8285"/>
                  <path d="M260 400L278 432 270 448 140 620 118 648 92 656 92 640 106 602 238 418z" fill="#d3d5d7"/>
                  <path d="M222 440L255 470M205 465L236 497M186 492L217 522M167 518L198 548M148 544L178 574M128 570L158 600M110 596L138 624" stroke="#85888b" stroke-width="8" fill="none"/>
                  <path d="M245 430L262 460M214 455L228 500M176 505L190 550M136 560L150 605" stroke="#f3f4f5" stroke-width="6" fill="none"/>
                </g>
              </svg>

              <div class="absolute top-[9.2%] left-[49.7%] flex h-[52px] items-center rounded-xl bg-slate-700 px-3.5 text-[26px] font-semibold text-white">YARIMCA
                <svg class="absolute top-full left-1/2 h-[14px] w-[30px]" viewBox="0 0 30 14"><path d="M0 0h30L16 14z" fill="#334155"/></svg>
              </div>
              <div class="absolute top-[19.6%] left-[54.7%] flex h-[45px] items-center gap-4 rounded-xl bg-[#dc2626] px-2 text-[26px] text-white"><span>EGPSD</span><span>+36h</span>
                <svg class="absolute top-1 right-full -mr-1 h-[37px] w-[18px]" viewBox="0 0 18 37"><path d="M18 0v37L2 20v-3z" fill="#dc2626"/></svg>
              </div>
              <div class="absolute top-[24.2%] left-[77.8%] flex h-[52px] items-center rounded-xl bg-slate-700 px-4 text-[26px] font-semibold text-white">HUANGPU
                <svg class="absolute top-1.5 right-full -mr-1 h-[40px] w-[18px]" viewBox="0 0 18 40"><path d="M18 0v40L2 22v-3z" fill="#334155"/></svg>
              </div>
              <div class="absolute top-[34.6%] left-[68.8%] flex h-[44px] items-center rounded-xl bg-[#dc2626] px-1.5 text-[26px] text-white">+10h
                <svg class="absolute top-full left-1/2 -ml-4 h-[14px] w-[30px]" viewBox="0 0 30 14"><path d="M0 0h30L15 14z" fill="#dc2626"/></svg>
              </div>
              <div class="absolute top-[72.2%] left-[48.9%] flex h-[44px] items-center rounded-xl bg-[#dc2626] px-1.5 text-[26px] text-white">+10h
                <svg class="absolute top-full left-1/2 -ml-4 h-[14px] w-[30px]" viewBox="0 0 30 14"><path d="M0 0h30L15 14z" fill="#dc2626"/></svg>
              </div>

              <div class="absolute bottom-5 left-5 flex h-[65px] items-center gap-7 rounded-2xl border-3 border-white bg-slate-50 px-3 text-[26px]">
                <span class="flex items-center gap-2.5"><svg class="size-[32px]"><use href="#crosshair"/></svg>34 397, 18 470</span>
                <span class="flex items-center gap-2"><svg class="h-[26px] w-[32px]"><use href="#gauge"/></svg>18 Knots</span>
                <span class="flex items-center gap-3"><svg class="size-[29px]"><use href="#compass"/></svg>145 SE</span>
              </div>
            </div>
          </div>

          <!-- Column: waypoints -->
          <div class="flex flex-col bg-slate-100">
            <div class="flex h-[122px] items-center gap-7 border-b-3 border-slate-200 bg-slate-50 px-7 text-[31px]/[64px] text-slate-600">
              <span class="rounded-xl bg-white pr-6 pl-5"><span class="font-medium">Route Congestion</span> <b class="ml-2.5 font-semibold text-[#10b981]">Normal</b></span>
              <span class="rounded-xl bg-white pr-6 pl-5">Carrier Reliability <b class="ml-2 font-semibold text-[#10b981]">High</b></span>
              <span class="ml-auto flex h-16 items-center gap-8 rounded-xl bg-white px-5 text-slate-700">
                <button aria-label="Call"><svg class="size-[34px]"><use href="#phone"/></svg></button>
                <button aria-label="Send mail"><svg class="size-[34px]"><use href="#mail-plus"/></svg></button>
              </span>
            </div>
            <div class="px-7 pt-5">
              <h2 class="mb-[18px] text-[31px]/[44px] font-semibold text-slate-600">Critical Waypoints</h2>
              <article class="h-[222px] border-t-3 border-white text-[#7a94a8]">
                <div class="flex justify-between text-[26px]/[38px] text-slate-400">
                  <span class="flex h-10 items-center gap-3.5 rounded-b-lg bg-white px-3 text-[23px] text-[#7a94a8]">Chokepoint <svg class="size-[20px]"><use href="#check"/></svg></span>
                  <time>3-6 Feb, 2026 (12hrs)</time>
                </div>
                <h3 class="mt-7 mb-6 ml-2 text-[32px]/[40px] font-semibold">1. Dardanelles / Çanakkale Strait</h3>
                <div class="flex gap-3.5 text-[26px]/[57px]">
                  <span class="flex items-center gap-3 rounded-full bg-white px-7"><svg class="size-[32px]"><use href="#radar"/></svg>High Congestion</span>
                  <span class="flex items-center gap-3.5 rounded-full bg-white px-7"><svg class="size-[30px]"><use href="#weather"/></svg>Stable</span>
                  <span class="flex items-center gap-3.5 rounded-full bg-white px-7"><svg class="h-[30px] w-[28px]"><use href="#flag"/></svg>No Incidents</span>
                </div>
              </article>
              <article class="h-[222px] border-t-3 border-white text-[#7a94a8]">
                <div class="flex justify-between text-[26px]/[38px]">
                  <span class="flex h-10 items-center gap-3.5 rounded-b-lg bg-white px-3 text-[23px]">Tansshipment <svg class="size-[20px]"><use href="#check"/></svg></span>
                  <time>4 Feb, 2026 (40.8hrs)</time>
                </div>
                <h3 class="mt-7 mb-6 ml-2 text-[32px]/[40px] font-semibold">2. Ambarlı / Kumport Terminal</h3>
                <div class="flex gap-3.5 text-[26px]/[57px]">
                  <span class="flex items-center gap-3 rounded-full bg-white px-7"><svg class="size-[32px]"><use href="#radar"/></svg>Low Congestion</span>
                  <span class="flex items-center gap-3.5 rounded-full bg-white px-7"><svg class="size-[30px]"><use href="#weather"/></svg>Stable</span>
                  <span class="flex items-center gap-3.5 rounded-full bg-white px-7"><svg class="h-[30px] w-[28px]"><use href="#flag"/></svg>Minor Pilotage Shortages</span>
                </div>
              </article>
              <article class="border-t-3 border-white">
                <div class="flex justify-between text-[26px]/[38px] text-slate-400">
                  <span class="flex h-10 items-center rounded-b-lg bg-sky-50 px-3 text-[23px] text-slate-700">Chokepoint</span>
                  <time>Feb 12-14, 2026 (44hrs)</time>
                </div>
                <h3 class="mt-7 ml-2 text-[32px]/[40px] font-semibold text-slate-600">3. Port Said / Suez Canal</h3>
              </article>
            </div>
          </div>
        </div>
      </section>

      <!-- Lower panels -->
      <div class="mt-[30px] grid grid-cols-[814fr_1979fr_1166fr] gap-[26px] text-slate-600">
        <section class="h-[320px] rounded-t-[28px] bg-slate-50">
          <div class="flex h-[119px] items-center rounded-t-[28px] border-b-3 border-slate-100 bg-white pr-[25px] pl-[28px]">
            <svg class="h-[32px] w-[38px] text-slate-700"><use href="#timeline"/></svg>
            <h2 class="ml-6 text-[36px] font-semibold text-slate-500">Journey Timeline</h2>
            <button class="ml-auto flex h-[70px] w-[82px] items-center justify-center rounded-2xl border-3 border-slate-300 text-slate-600" aria-label="Calendar"><svg class="size-[34px]"><use href="#calendar"/></svg></button>
          </div>
          <div class="px-[27px] pt-11">
            <button class="flex h-[58px] w-full items-center rounded-full border-3 border-slate-300/80 pl-8 text-[32px]">
              <svg class="size-6"><use href="#chevron"/></svg><span class="ml-8">Pre Transit Events</span>
            </button>
            <div class="ml-[82px] h-[54px] w-[3px] bg-slate-400"></div>
            <div class="h-[58px] rounded-full border-3 border-slate-300/80"></div>
          </div>
        </section>

        <section class="h-[320px] rounded-t-[28px] bg-slate-50">
          <div class="flex h-[121px] rounded-t-[28px] bg-slate-100 text-[36px] font-semibold" role="tablist">
            <div class="flex w-[1333px] rounded-t-[28px] bg-slate-50">
              <button class="w-[688px] rounded-t-[28px] bg-white pl-10 text-left" role="tab" aria-selected="true">Upcoming Exceptions <span class="font-normal text-slate-400">• 03</span></button>
              <button class="pl-10 text-left" role="tab">Past Exceptions <span class="font-normal text-slate-400">• 02</span></button>
            </div>
            <button class="pl-10 text-left" role="tab">Journey Summary</button>
          </div>
          <div class="flex h-[124px] items-center gap-7 border-b-3 border-slate-200 bg-white px-7 text-[30px]/[64px]">
            <span class="rounded-xl bg-slate-50 pr-6 pl-[22px]">Risks <b class="ml-2 font-semibold">03</b> <span class="text-slate-400">• 1 New</span></span>
            <span class="flex items-center rounded-xl bg-slate-50 px-6">Expected Delay <b class="ml-4 text-[31px] font-semibold">84H</b> <svg class="ml-5 h-[18px] w-[20px]" viewBox="0 0 20 18"><path d="M10 0l10 18H0z" fill="#ef4444"/></svg></span>
            <span class="rounded-xl bg-slate-50 px-6">Impact <b class="ml-2.5 text-[31px] font-semibold text-[#ef4444]">High</b></span>
          </div>
        </section>

        <section class="h-[320px] rounded-t-[28px] bg-slate-50">
          <div class="flex h-[119px] items-center justify-between rounded-t-[28px] border-b-3 border-slate-100 bg-white px-7">
            <h2 class="flex items-center gap-6 text-[36px] font-semibold text-slate-600"><svg class="size-[40px]"><use href="#click"/></svg>Actions Taken</h2>
            <a href="#" class="flex h-[86px] items-center gap-4 rounded-2xl bg-red-50 px-6 text-[36px] text-[#ef4444]">
              <span class="flex size-12 items-center justify-center rounded-full bg-white"><span class="size-6 rounded-full bg-[#ef4444]"></span></span>
              Available Interventions
              <svg class="ml-3 size-[25px]"><use href="#arrow-bare"/></svg>
            </a>
          </div>
          <div class="flex items-center justify-between px-7 pt-[54px] text-[26px]">
            <div class="flex h-[60px] overflow-hidden rounded-xl border-3 border-slate-200 bg-white text-slate-500">
              <span class="flex items-center bg-slate-200 px-4">L07</span>
              <span class="flex items-center gap-3 px-4"><svg class="size-[29px]"><use href="#coins"/></svg>$560</span>
              <span class="flex items-center gap-3 border-l-3 border-slate-200 px-4"><svg class="size-[29px]"><use href="#clock-down"/></svg>48h</span>
            </div>
            <span class="flex h-16 items-center gap-3 rounded-xl bg-emerald-50 px-4 font-medium text-[#10b981]"><svg class="size-[32px]"><use href="#badge-check"/></svg>Outcome Observed</span>
          </div>
          <div class="ml-[38px] border-l-3 border-slate-200 pt-7 pl-7 text-[30px]/[40px] text-slate-500">Uploaded commercial invoice to AOF portal</div>
        </section>
      </div>
    </main>

    <div class="pointer-events-none absolute inset-x-0 bottom-0 h-[360px] bg-linear-to-b from-slate-50/0 to-slate-50/45"></div>
  </div>

</body>
</html>
